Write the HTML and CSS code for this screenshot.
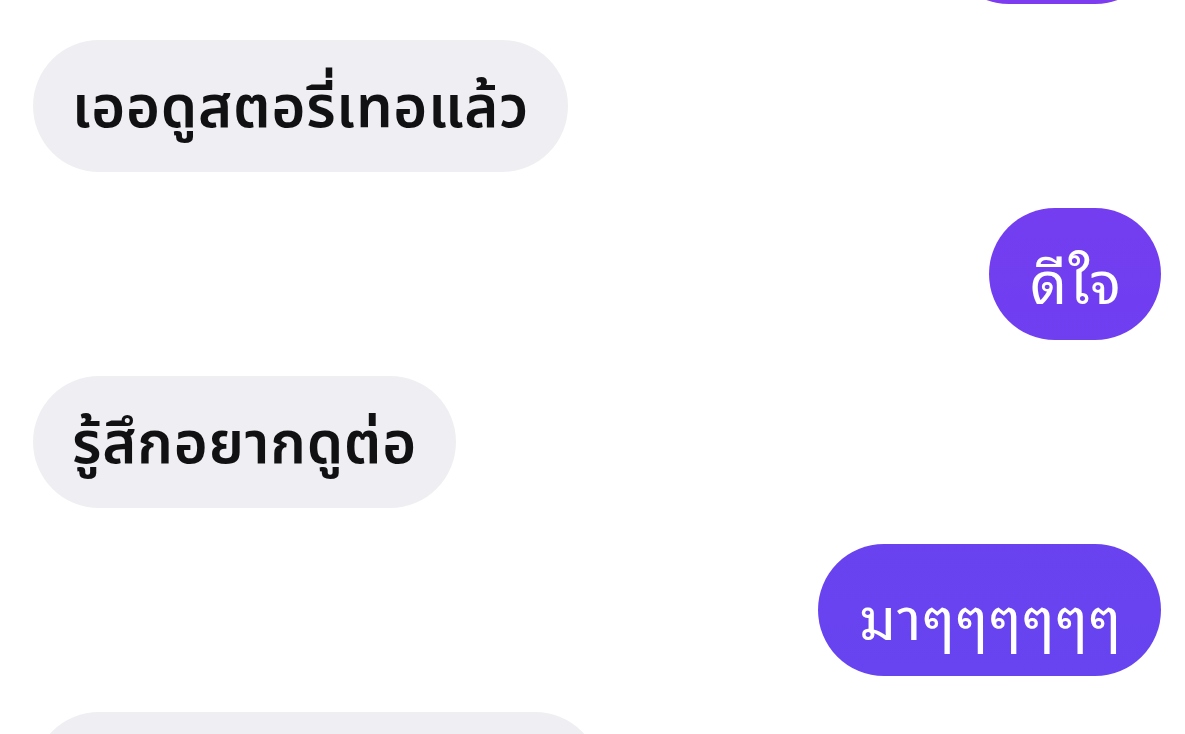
FILE: index.html
```html
<!DOCTYPE html>
<html lang="th">
<head>
<meta charset="utf-8">
<link rel="stylesheet" href="styles.css">
</head>
<body>
<div class="thread">
  <div class="row out"><div class="bubble sent">ดีมาก</div></div>
  <div class="row in"><div class="bubble recv">เออดูสตอรี่เทอแล้ว</div></div>
  <div class="row out"><div class="bubble sent">ดีใจ</div></div>
  <div class="row in"><div class="bubble recv">รู้สึกอยากดูต่อ</div></div>
  <div class="row out"><div class="bubble sent">มาๆๆๆๆๆๆ</div></div>
  <div class="row in"><div class="bubble recv">แล้วเจอกันนะเพื่อนๆ</div></div>
</div>
</body>
</html>
```
FILE: styles.css
```css
html, body {
  margin: 0;
  padding: 0;
  background: #ffffff;
  overflow: hidden;
}
body {
  width: 1185px;
  height: 734px;
  font-family: "Noto Sans Thai", "Noto Sans", "DejaVu Sans", sans-serif;
}
.thread {
  display: flex;
  flex-direction: column;
  gap: 36px;
  margin-top: -128px;
  padding: 0 24px 0 33px;
}
.row {
  display: flex;
}
.row.out {
  justify-content: flex-end;
}
.row.in {
  justify-content: flex-start;
}
.bubble {
  height: 132px;
  box-sizing: border-box;
  padding: 6px 39px 0 39px;
  border-radius: 66px;
  display: flex;
  align-items: center;
  font-size: 58px;
  letter-spacing: 1px;
  white-space: nowrap;
}
.recv {
  background: #efeff3;
  color: #111113;
  font-weight: 600;
  letter-spacing: 0.8px;
}
.sent {
  color: #ffffff;
  font-family: "Noto Sans Thai Looped", "Loma", "Garuda", "Noto Serif Thai", "Noto Sans Thai", sans-serif;
  font-weight: 400;
  padding-left: 41px;
  background: linear-gradient(180deg, #7d3cf0 0px, #703ef0 300px, #6545ef 734px) fixed;
}
```
